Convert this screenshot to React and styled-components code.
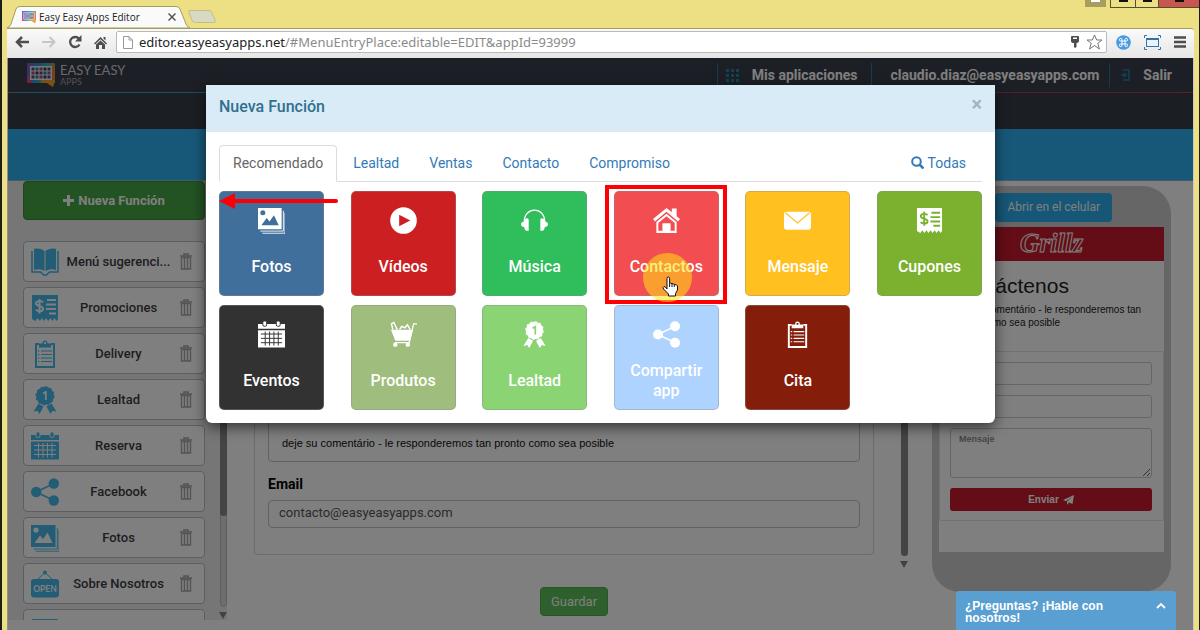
import React from "react";
import styled, { createGlobalStyle } from "styled-components";

const Global = createGlobalStyle`
  * { box-sizing: border-box; }
  body { margin: 0; font-family: Roboto, "Liberation Sans", sans-serif; overflow: hidden; }
  button, input, textarea { font: inherit; }
  button { cursor: pointer; }
  a { color: inherit; text-decoration: none; }
  svg { flex: none; }
`;

/* ---------- browser window ---------- */
const Window = styled.div`
  display: flex;
  flex-direction: column;
  height: 100vh;
  overflow: hidden;
  background: #ecdf84;
  border-left: 2px solid #1c1c18;
  border-right: 1px solid #1c1c18;
`;
const TitleBar = styled.div`
  display: flex;
  flex: 0 0 27px;
  justify-content: space-between;
  align-items: flex-start;
`;
const TabStrip = styled.div`
  display: flex;
  padding: 6px 0 0 5px;
`;
const BrowserTab = styled.div`
  position: relative;
  display: flex;
  align-items: center;
  width: 183px;
  height: 22px;
  padding: 0 14px 0 15px;
  font: 10px/20px "Open Sans", sans-serif;
  color: #222;
  z-index: 1;
`;
const TabShape = styled.svg`
  position: absolute;
  inset: 0;
  width: 100%;
  height: 100%;
  z-index: -1;
`;
const TabTitle = styled.span`
  flex: 1;
  padding-left: 3px;
  white-space: nowrap;
`;
const TabClose = styled.button`
  display: flex;
  padding: 0;
  border: 0;
  background: none;
  color: #555;
`;
const NewTab = styled.button`
  width: 24px;
  height: 13px;
  margin: 4px 0 0 0;
  padding: 0;
  border: 1px solid #c4bd84;
  border-radius: 3px;
  background: #d8d9c2;
  transform: skewX(22deg);
`;
const WindowButtons = styled.div`
  display: flex;
  height: 7px;
`;
const WinButton = styled.button`
  display: flex;
  justify-content: center;
  align-items: flex-start;
  width: ${(p) => p.$w}px;
  height: ${(p) => (p.$gap ? 7 : 8)}px;
  margin: 0 ${(p) => p.$gap || 0}px 0 0;
  padding: 0;
  border: solid #544f2c;
  border-width: ${(p) => (p.$gap ? "0" : "0 0 1px 1px")};
  background: ${(p) => p.$bg};
  &::after {
    content: "";
    width: 9px;
    height: 2px;
    background: ${(p) => p.$mark || "#111"};
  }
`;
const Toolbar = styled.div`
  display: flex;
  flex: 0 0 30px;
  align-items: center;
  gap: 13px;
  margin: 0 5px 0 5px;
  padding: 0 8px 3px;
  background: linear-gradient(#fafafa, #e6e6e6);
  border-top: 1px solid #a59c60;
  border-radius: 0 3px 0 0;
`;
const ToolButton = styled.button`
  display: flex;
  padding: 0;
  border: 0;
  background: none;
  color: ${(p) => p.$color || "#4d4d4d"};
`;
const NavButtons = styled.div`
  display: flex;
  align-items: center;
  gap: 12px;
`;
const Address = styled.div`
  display: flex;
  flex: 1;
  align-items: center;
  height: 22px;
  margin-left: -4px;
  padding: 0 3px 0 6px;
  border: 1px solid #b9b9b9;
  border-radius: 2px;
  background: #fff;
`;
const Url = styled.a`
  flex: 1;
  padding-left: 6px;
  font: 13px/18px "Noto Sans", "Open Sans", sans-serif;
  color: #8b8b8b;
  b { font-weight: 400; color: #222; }
`;
const AddressIcons = styled.div`
  display: flex;
  align-items: center;
  gap: 6px;
`;
const Extensions = styled.div`
  display: flex;
  align-items: center;
  gap: 13px;
  margin-left: -4px;
`;

/* ---------- application page ---------- */
const Page = styled.div`
  position: relative;
  display: flex;
  flex: 1;
  flex-direction: column;
  min-height: 0;
  margin: 0 5px 0 5px;
  border-left: 1px solid #8f8f8f;
  border-right: 1px solid #c8c8c8;
  background: #fff;
`;
const Header = styled.header`
  display: flex;
  flex: 0 0 34px;
  align-items: center;
  justify-content: space-between;
  padding-left: 19px;
  background: #393e4a;
`;
const Rainbow = styled.div`
  flex: 0 0 1px;
  background: linear-gradient(90deg, #8a8a30 0 5px, #3c9cc4 6px 50%, #5a6a88 60%, #95406a 75%, #a03c5c 98%, #e04030);
`;
const Brand = styled.a`
  display: flex;
  align-items: center;
  gap: 5px;
  font-family: Lato, sans-serif;
`;
const BrandText = styled.span`
  display: flex;
  flex-direction: column;
  color: #d2d2d6;
  font-size: 13px;
  line-height: 13px;
  small { font-size: 9px; line-height: 10px; color: #a0a2aa; }
`;
const HeaderNav = styled.nav`
  display: flex;
  align-items: center;
  color: #fff;
  font-size: 14px;
  font-weight: 700;
  line-height: 24px;
`;
const HeaderLink = styled.a`
  display: flex;
  align-items: center;
  gap: 13px;
  padding: 0 ${(p) => p.$right}px 0 ${(p) => p.$left}px;
  border-left: 1px solid #2a7c98;
`;
const DarkBand = styled.div`
  flex: 0 0 36px;
  background: #373c47;
`;
const BlueBand = styled.div`
  flex: 0 0 52px;
  background: #2fb0f2;
  border-bottom: 1px solid #8ab8cc;
`;
const Columns = styled.div`
  display: flex;
  flex: 1;
  min-height: 0;
  overflow: hidden;
`;

/* sidebar */
const Sidebar = styled.aside`
  display: flex;
  flex: 0 0 219px;
  align-self: stretch;
  margin-bottom: 10px;
  overflow: hidden;
  background: #ededed;
`;
const SideMain = styled.div`
  flex: 1;
  padding: 0 14px 0 15px;
`;
const NewFunction = styled.button`
  display: flex;
  align-items: center;
  justify-content: center;
  gap: 4px;
  width: 100%;
  height: 39px;
  border: 1px solid #3c8c3c;
  border-radius: 4px;
  background: #46a446;
  color: #fff;
  font-size: 13px;
  font-weight: 700;
`;
const ItemList = styled.ul`
  display: flex;
  flex-direction: column;
  gap: 5px;
  margin: 21px 0 0;
  padding: 0;
  list-style: none;
`;
const Item = styled.li`
  display: flex;
  align-items: center;
  height: 41px;
  flex: none;
  padding: 0 12px 0 7px;
  border: 1px solid #b6bcc4;
  border-radius: 4px;
  background: #fff;
`;
const ItemName = styled.a`
  flex: 1;
  padding-right: 2px;
  color: #3c3c44;
  font-size: 13px;
  font-weight: 500;
  text-align: center;
  white-space: nowrap;
`;
const Trash = styled.button`
  display: flex;
  padding: 0;
  border: 0;
  background: none;
  color: #a8a8a8;
`;
const ScrollRail = styled.div`
  display: flex;
  flex-direction: column;
  align-items: center;
  gap: 5px;
  flex: 0 0 7px;
  height: ${(p) => p.$height}px;
  color: #858585;
`;
const Track = styled.div`
  flex: 1;
  width: 7px;
  border: 1px solid #bbb;
  border-radius: 4px;
  background: #dcdcdc;
`;
const Thumb = styled.div`
  height: ${(p) => p.$size};
  margin: -1px;
  border-radius: 4px;
  background: #888;
`;

/* contact form */
const Center = styled.main`
  flex: 1;
`;
const FormRow = styled.div`
  display: flex;
  justify-content: space-between;
  gap: 26px;
  padding: 0 13px 0 27px;
`;
const FormPanel = styled.section`
  flex: 1;
  align-self: flex-start;
  padding: 20px 13px 26px 13px;
  border: 1px solid #d8d8d8;
  border-top: 0;
  border-radius: 0 0 4px 4px;
`;
const Comment = styled.textarea`
  display: block;
  width: 100%;
  height: 261px;
  padding: 234px 13px 0;
  border: 1px solid #c4c4c4;
  border-radius: 4px;
  background: #fff;
  color: #111;
  font: 11px/14px "Liberation Sans", Arial, sans-serif;
  resize: none;
  overflow: hidden;
`;
const FieldLabel = styled.label`
  display: block;
  margin: 12px 0 6px;
  color: #000;
  font-size: 14px;
  font-weight: 700;
  line-height: 20px;
`;
const TextField = styled.input`
  display: block;
  width: 100%;
  height: 28px;
  padding: 0 10px 3px;
  border: 1px solid #c4c4c4;
  border-radius: 4px;
  background: #fff;
  color: #555;
  font-size: 13px;
`;
const Save = styled.button`
  display: block;
  height: 29px;
  margin: 19px auto 0;
  padding: 0 10px;
  border: 1px solid #50a850;
  border-radius: 4px;
  background: #5cc05c;
  color: #fff;
  font-size: 13px;
`;

/* phone preview */
const Phone = styled.aside`
  flex: 0 0 239px;
  align-self: flex-start;
  height: 406px;
  margin: 5px 22px 0 11px;
  padding: 7px 7px 0;
  border-radius: 28px;
  background: #cdcdcd;
`;
const OpenOnPhone = styled.button`
  display: block;
  height: 29px;
  margin: 0 52px 5px auto;
  padding: 0 12px 2px;
  border: 0;
  border-radius: 4px;
  background: #2cacec;
  color: #fff;
  font-size: 12px;
  white-space: nowrap;
`;
const Screen = styled.div`
  height: 325px;
  background: #fff;
  font-family: "Liberation Sans", Arial, sans-serif;
`;
const PhoneBar = styled.div`
  height: 34px;
  background: #c91a2c;
  text-align: center;
  font: italic 700 27px/32px "Liberation Serif", serif;
  color: #c91a2c;
  -webkit-text-stroke: 1px #fff;
`;
const PhoneText = styled.div`
  height: 90px;
  padding: 13px 12px 0;
  color: #222;
  h2 { margin: 0; font-size: 21px; font-weight: 400; line-height: 24px; }
  p { margin: 5px 0 0; font-size: 10px; line-height: 13px; }
`;
const PhoneForm = styled.form`
  display: flex;
  flex-direction: column;
  gap: 10px;
  padding: 10px 11px 9px 10px;
  border: 1px solid #e2e2e2;
  border-radius: 2px;
`;
const phoneField = `
  display: block;
  width: 100%;
  border: 1px solid #ccc;
  border-radius: 3px;
  background: #fff;
  padding: 5px 8px;
  font-size: 9px;
  font-weight: 700;
  &::placeholder { color: #8c8c8c; opacity: 1; }
`;
const PhoneInput = styled.input`${phoneField} height: 23px;`;
const PhoneArea = styled.textarea`${phoneField} height: 50px;`;
const Send = styled.button`
  display: flex;
  align-items: center;
  justify-content: center;
  gap: 4px;
  height: 23px;
  border: 0;
  border-radius: 3px;
  background: #c91a2c;
  color: #fff;
  font-size: 10px;
  font-weight: 700;
`;

/* dialog over the page */
const Backdrop = styled.div`
  position: absolute;
  inset: 0;
  display: flex;
  justify-content: center;
  align-items: flex-start;
  padding-top: 27px;
  background: rgba(0, 0, 0, 0.5);
`;
const Dialog = styled.section`
  width: 789px;
  max-width: 100%;
  border-radius: 0 0 6px 6px;
  background: #fff;
  box-shadow: 0 4px 14px rgba(0, 0, 0, 0.6);
  overflow: hidden;
`;
const DialogHead = styled.div`
  display: flex;
  justify-content: space-between;
  height: 47px;
  padding: 12px 13px 0;
  border-bottom: 1px solid #e0e6ea;
  background: #d9ebf6;
  h1 { margin: 0; color: #31708f; font-size: 16px; font-weight: 500; line-height: 20px; }
`;
const CloseButton = styled.button`
  height: 14px;
  padding: 0;
  border: 0;
  background: none;
  color: #a4b3bc;
  font: 700 20px/14px Roboto, sans-serif;
`;
const DialogBody = styled.div`
  padding: 13px;
`;
const Tabs = styled.div`
  display: flex;
  gap: 2px;
  border-bottom: 1px solid #ddd;
`;
const TabButton = styled.button`
  display: flex;
  align-items: center;
  gap: 4px;
  height: 37px;
  margin: 0 0 -1px ${(p) => (p.$end ? "auto" : "0")};
  padding: 0 ${(p) => (p.$end ? "15px" : "13px")} 2px 13px;
  border: 1px solid ${(p) => (p.$active ? "#ddd" : "transparent")};
  border-bottom-color: ${(p) => (p.$active ? "#fff" : "transparent")};
  border-radius: 4px 4px 0 0;
  background: ${(p) => (p.$active ? "#fff" : "none")};
  color: ${(p) => (p.$active ? "#666" : "#337ab7")};
  font-size: 14px;
`;
const TileGrid = styled.div`
  display: grid;
  grid-template-columns: repeat(6, 105px);
  justify-content: space-between;
  row-gap: 9px;
  padding-top: 9px;
`;
const TileCell = styled.div`
  position: relative;
`;
const Tile = styled.button`
  display: flex;
  flex-direction: column;
  align-items: center;
  width: 100%;
  height: 105px;
  padding: 15px 8px 0;
  border: 1px solid rgba(140, 140, 140, 0.4);
  border-radius: 5px;
  background: ${(p) => p.$bg};
  color: #fff;
`;
const TileLabel = styled.span`
  display: flex;
  flex: 0 0 66px;
  align-items: center;
  font-size: 16px;
  font-weight: 500;
  line-height: 20px;
`;
const Frame = styled.div`
  position: absolute;
  inset: -6px -8px -8px -9px;
  border: 4px solid #fc0006;
  pointer-events: none;
`;
const Spot = styled.div`
  position: absolute;
  left: 29px;
  top: 62px;
  width: 49px;
  height: 49px;
  border-radius: 50%;
  background: rgba(255, 226, 20, 0.55);
  pointer-events: none;
`;
const Pointer = styled.svg`
  position: absolute;
  left: 48px;
  top: 85px;
  pointer-events: none;
`;
const Arrow = styled.svg`
  position: absolute;
  left: 0;
  top: 2px;
  pointer-events: none;
`;
const Chat = styled.button`
  position: absolute;
  right: 17px;
  bottom: 0;
  display: flex;
  justify-content: space-between;
  align-items: flex-start;
  width: 220px;
  height: 39px;
  padding: 9px 10px 0 9px;
  border: 0;
  border-radius: 3px 3px 0 0;
  background: #5a9fd1;
  color: #fff;
  font: 700 12px/12px "Liberation Sans", Arial, sans-serif;
  text-align: left;
  span { width: 150px; }
`;

/* ---------- icons ---------- */
const Svg = ({ size = 28, children }) => (
  <svg width={size} height={size} viewBox="0 0 28 28" fill="currentColor" aria-hidden="true">{children}</svg>
);
const icons = {
  book: () => (
    <>
      <path d="M3 1C7 0 11 1 13.500 3V23C10 21 6 21 3 22z" />
      <path d="M25 1C21 0 17 1 14.500 3V23C18 21 22 21 25 22z" />
      <path d="M1 3V24H9.500L12.500 27H15.500L18.500 24H27V3" fill="none" stroke="currentColor" strokeWidth="1.500" />
    </>
  ),
  coupon: (cut) => (
    <>
      <path d="M1 1H27V25l-1.500 2-2-3-2.200 3-2-3-2.200 3-2-3-2.200 3-2-3-2.200 3-2-3-2.200 3L1 25z" />
      <path d="M12 8.500C10.500 6.500 5 6.500 5 9.500s7 2 7 5.200-5.500 3-7.200 1M8.500 5V19.500" fill="none" stroke={cut} strokeWidth="2" />
      <path d="M16 6H25M15 10.500H25M15 15H25M18 19.500H25" stroke={cut} strokeWidth="2" />
    </>
  ),
  clipboard: () => (
    <>
      <path d="M8 4H5V27H23V4H20" fill="none" stroke="currentColor" strokeWidth="2" />
      <path fillRule="evenodd" d="M8 7.500V3.500H11.500A2.500 3 0 0 1 16.500 3.500H20V7.500zM13 4h2v-2h-2z" />
      <path d="M10 11H21M10 14.500H21M10 18H21M10 21.500H21M7 11h1.500M7 14.500h1.500M7 18h1.500M7 21.500h1.500" stroke="currentColor" strokeWidth="1.200" />
    </>
  ),
  medal: (cut) => (
    <>
      <path d="M7.500 17.500L12.500 20.500L8.500 28L6.500 24.800L2.500 25.800zM20.500 17.500L15.500 20.500L19.500 28L21.500 24.800L25.500 25.800z" />
      <circle cx="14" cy="9.800" r="9" fill="currentColor" />
      <circle cx="14" cy="9.800" r="9" fill="none" stroke="currentColor" strokeWidth="1.200" strokeDasharray="2.300 2.400" />
      <path d="M12 7.500L14.800 6V14" fill="none" stroke={cut} strokeWidth="1.800" />
    </>
  ),
  calendar: (cut) => (
    <>
      <path d="M0 3H28V8H0zM0 9.500H28V27.500H0z" />
      <path d="M3 13.500H25M3 18H25M3 22.500H25M7.500 11V25.500M12 11V25.500M16.500 11V25.500M21 11V25.500" stroke={cut} strokeWidth="1" />
      <rect x="5" y="0" width="4" height="5.500" rx="1.500" stroke={cut} />
      <rect x="19" y="0" width="4" height="5.500" rx="1.500" stroke={cut} />
    </>
  ),
  share: () => (
    <>
      <path d="M5 14L23 5.500M5 14L23 22.500" stroke="currentColor" strokeWidth="1.500" />
      <circle cx="5.200" cy="14" r="5.200" />
      <circle cx="22.800" cy="5.500" r="5.200" />
      <circle cx="22.800" cy="22.500" r="5.200" />
    </>
  ),
  photos: (cut) => (
    <>
      <path d="M0 1H24.500V23H0z" />
      <path d="M2.500 25H26.300V4M4.500 27.200H28V6" fill="none" stroke="currentColor" strokeWidth="0.900" />
      <path d="M3.500 19L9 11.500L12 15L16.500 8.500L21.500 19z" fill={cut} />
      <circle cx="5" cy="6" r="2.600" fill={cut} />
    </>
  ),
  open: (cut) => (
    <>
      <circle cx="14" cy="2.500" r="2" />
      <path d="M14 2.500L6 10M14 2.500L22 10" stroke="currentColor" />
      <rect x="0" y="9" width="28" height="18.500" rx="3" />
      <text x="14" y="21.500" textAnchor="middle" fontFamily="Lato" fontWeight="700" fontSize="8.500" fill={cut}>OPEN</text>
    </>
  ),
  play: (cut) => (
    <>
      <circle cx="14" cy="14" r="13.800" />
      <path d="M9.500 8L21 14L9.500 20z" fill={cut} />
    </>
  ),
  headphones: () => (
    <>
      <path d="M3.500 16C2.500 -1 25.500 -1 24.500 16" fill="none" stroke="currentColor" strokeWidth="1.300" />
      <path d="M4 12.500Q8 10.500 8 13.500V24.500H6Q3.500 24.500 3.500 21Q0 20.500 0 18T3.500 15zM24 12.500Q20 10.500 20 13.500V24.500H22Q24.500 24.500 24.500 21Q28 20.500 28 18T24.500 15z" />
    </>
  ),
  house: () => (
    <>
      <path d="M0 12.500L14 1L19.500 5.500V1.500H24.500V9.500L28 12.500L26 15L14 5L2 15z" />
      <path fillRule="evenodd" d="M3.500 15.500L14 7L24.500 15.500V27H3.500zM5.500 16.500V24.500H10V17H18V24.500H22.500V16.500L14 9.500z" />
      <path d="M10 17H18V26H10z" />
    </>
  ),
  mail: (cut) => (
    <>
      <rect x="0" y="5" width="28" height="18.500" rx="2.500" />
      <path d="M1.500 6L14 16.500L26.500 6" fill="none" stroke={cut} strokeWidth="1.200" />
    </>
  ),
  cart: () => (
    <>
      <path d="M1 9H24L20.500 20.500H5.500z" />
      <path d="M28 3H24.500L20 22.500H5" fill="none" stroke="currentColor" strokeWidth="1.300" />
      <path d="M3 9L1.500 3L4 1.500L7.500 9M10 9L12 5.500L15.500 7L18 4L21 9" fill="none" stroke="currentColor" strokeWidth="1.500" />
      <circle cx="5.500" cy="24.500" r="2.300" />
      <circle cx="18.500" cy="24.500" r="2.300" />
    </>
  ),
  envelopeTop: () => <rect x="1" y="3" width="26" height="18" rx="1" />,
};
const Icon = ({ name, cut, size }) => <Svg size={size}>{icons[name](cut)}</Svg>;

const TrashIcon = () => (
  <svg width="12" height="17" viewBox="0 0 12 17" fill="none" stroke="currentColor" aria-hidden="true">
    <path d="M0 3H12M4 2.500V1H8V2.500" strokeWidth="1.600" />
    <path d="M1.500 4.500H10.500V16H1.500zM4.500 5V15.500M7.500 5V15.500" strokeWidth="1.400" />
  </svg>
);
const AppLogo = ({ w, h }) => (
  <svg width={w} height={h} viewBox="0 0 28 24" aria-hidden="true">
    <defs>
      <linearGradient id="spectrum" x1="0" x2="1" y1="0" y2="0.300">
        <stop offset="0" stopColor="#a04cc0" />
        <stop offset="0.300" stopColor="#3f7fe0" />
        <stop offset="0.650" stopColor="#30b8c0" />
        <stop offset="1" stopColor="#f08030" />
      </linearGradient>
    </defs>
    <path d="M1 0H27Q28 0 28 1V20H27L26 24L20 20H1Q0 20 0 19V1Q0 0 1 0z" fill="url(#spectrum)" />
    <path d="M0 13H5V20H0z" fill="#d84890" />
    <path d="M14 17H28V20H27L26 24L20 20H14z" fill="#f0a030" />
    <rect x="3" y="3" width="22" height="14" fill="#eee" />
    {[4, 8, 12, 16, 20].map((x, i) => [4, 8, 12].map((y, j) => (
      <rect key={x + "-" + y} x={x + 0.500} y={y + 0.500} width="3" height="3" fill={["#3a4f9a", "#2e7fb0", "#c04058", "#31455e"][(i + j * 2) % 4]} />
    )))}
  </svg>
);
const Down = () => <svg width="8" height="7" viewBox="0 0 8 7" aria-hidden="true"><path d="M0 0H8L4 7z" fill="currentColor" /></svg>;

/* ---------- content ---------- */
const menu = [
  ["book", "Menú sugerenci..."], ["coupon", "Promociones"], ["clipboard", "Delivery"], ["medal", "Lealtad"],
  ["calendar", "Reserva"], ["share", "Facebook"], ["photos", "Fotos"], ["open", "Sobre Nosotros"], ["envelopeTop", ""],
];
const tiles = [
  ["photos", "Fotos", "#416f9c"], ["play", "Vídeos", "#cc1f21"], ["headphones", "Música", "#30bd5b"],
  ["house", "Contactos", "#f24d50"], ["mail", "Mensaje", "#ffc020"], ["coupon", "Cupones", "#7bb12f"],
  ["calendar", "Eventos", "#323232"], ["cart", "Produtos", "#9fbd7c"], ["medal", "Lealtad", "#8ad474"],
  ["share", "Compartir app", "#aed3ff"], ["clipboard", "Cita", "#841e0b"],
];
const MenuIcon = styled.span`
  display: flex;
  color: #45b8ea;
`;

export default function App() {
  return (
    <Window>
      <Global />
      <TitleBar>
        <TabStrip>
          <BrowserTab>
            <TabShape viewBox="0 0 183 22" preserveAspectRatio="none">
              <path d="M0 22Q3 21 4 18L9 3Q10 .5 13 .5H169Q172 .5 173 3L179 18Q180 21 183 22z" fill="#fafafa" stroke="#a59c60" />
            </TabShape>
            <AppLogo w={14} h={12} />
            <TabTitle>Easy Easy Apps Editor</TabTitle>
            <TabClose aria-label="Cerrar pestaña">
              <svg width="8" height="8" viewBox="0 0 8 8" stroke="currentColor" strokeWidth="1.500"><path d="M.5.5l7 7M7.500.5l-7 7" /></svg>
            </TabClose>
          </BrowserTab>
          <NewTab aria-label="Nueva pestaña" />
        </TabStrip>
        <WindowButtons>
          <WinButton $w={21} $gap={4} $bg="#a69d5e" $mark="#fff" aria-label="Anclar" />
          <WinButton $w={25} $bg="#ecdf84" aria-label="Minimizar" />
          <WinButton $w={23} $bg="#ecdf84" aria-label="Maximizar" />
          <WinButton $w={41} $bg="#c75550" aria-label="Cerrar" />
        </WindowButtons>
      </TitleBar>
      <Toolbar>
        <NavButtons>
          <ToolButton aria-label="Atrás">
            <svg width="15" height="12" viewBox="0 0 15 12" fill="none" stroke="currentColor" strokeWidth="2.500"><path d="M14 6H2M7 1L2 6L7 11" /></svg>
          </ToolButton>
          <ToolButton $color="#c6c6c6" aria-label="Adelante">
            <svg width="14" height="12" viewBox="0 0 14 12" fill="none" stroke="currentColor" strokeWidth="2"><path d="M0 6H12M7.500 1L12.500 6L7.500 11" /></svg>
          </ToolButton>
          <ToolButton aria-label="Recargar">
            <svg width="14" height="14" viewBox="0 0 14 14"><path d="M11.500 9.500A5 5 0 1 1 11 3.800" fill="none" stroke="currentColor" strokeWidth="2.300" /><path d="M13.500 0V6.500H7z" fill="currentColor" /></svg>
          </ToolButton>
          <ToolButton aria-label="Inicio">
            <svg width="13" height="13" viewBox="0 0 13 13" fill="currentColor"><path d="M6.500 1L13 7.500L12 8.500L6.500 3.200L1 8.500L0 7.500zM9.500 1H11.500V4.500L9.500 2.500zM2 8.500L6.500 4.500L11 8.500V13H8V9H5V13H2z" /></svg>
          </ToolButton>
        </NavButtons>
        <Address>
          <svg width="10" height="13" viewBox="0 0 10 13" fill="#fff" stroke="#999"><path d="M.5.5H6L9.500 4V12.500H.5zM6 .5V4H9.500" /></svg>
          <Url href="#MenuEntryPlace"><b>editor.easyeasyapps.net</b>/#MenuEntryPlace:editable=EDIT&amp;appId=93999</Url>
          <AddressIcons>
            <ToolButton aria-label="Contraseñas">
              <svg width="10" height="12" viewBox="0 0 10 12" fill="currentColor"><path fillRule="evenodd" d="M2 0H8Q9 0 9 1V5Q9 7 6.500 7V11L5 12L4 11V7Q1 7 1 5V1Q1 0 2 0zM3 1.500V3H7V1.500z" /></svg>
            </ToolButton>
            <ToolButton $color="#777" aria-label="Favorito">
              <svg width="17" height="16" viewBox="0 0 17 16" fill="#fff" stroke="currentColor"><path d="M8.500 1L10.700 6H16L11.800 9.300L13.400 15L8.500 11.500L3.600 15L5.200 9.300L1 6H6.300z" /></svg>
            </ToolButton>
          </AddressIcons>
        </Address>
        <Extensions>
          <ToolButton aria-label="Extensión">
            <svg width="15" height="15" viewBox="0 0 15 15"><circle cx="7.500" cy="7.500" r="7.300" fill="#4b9be0" /><path d="M6 6V4.700A1.300 1.300 0 1 0 4.700 6H10.300A1.300 1.300 0 1 0 9 4.700V10.300A1.300 1.300 0 1 0 10.300 9H4.700A1.300 1.300 0 1 0 6 10.300z" fill="none" stroke="#fff" /></svg>
          </ToolButton>
          <ToolButton $color="#3673a5" aria-label="Captura">
            <svg width="17" height="15" viewBox="0 0 17 15" fill="none" stroke="currentColor"><path d="M.5 3V.5H3M14 .5H16.500V3M16.500 12V14.500H14M3 14.500H.5V12" /><rect x="2.500" y="3.500" width="12" height="8" fill="#e8f2fa" /><path d="M2.500 4H14.500" strokeWidth="2" /></svg>
          </ToolButton>
          <ToolButton aria-label="Menú">
            <svg width="12" height="12" viewBox="0 0 12 12" stroke="currentColor" strokeWidth="2.400"><path d="M0 1.500H12M0 6H12M0 10.500H12" /></svg>
          </ToolButton>
        </Extensions>
      </Toolbar>

      <Page>
        <Header>
          <Brand href="#inicio">
            <AppLogo w={28} h={24} />
            <BrandText>EASY EASY<small>APPS</small></BrandText>
          </Brand>
          <HeaderNav>
            <HeaderLink href="#aplicaciones" $left={8} $right={14}>
              <svg width="13" height="13" viewBox="0 0 13 13" fill="#1f86a8">
                {[0, 5, 10].map((x) => [0, 5, 10].map((y) => <rect key={x + "-" + y} x={x} y={y} width="3" height="3" />))}
              </svg>
              Mis aplicaciones
            </HeaderLink>
            <HeaderLink href="#cuenta" $left={18} $right={10}>claudio.diaz@easyeasyapps.com</HeaderLink>
            <HeaderLink href="#salir" $left={11} $right={21}>
              <svg width="9" height="12" viewBox="0 0 9 12" fill="none" stroke="#1f86a8" strokeWidth="1.500"><path d="M2 1H8V11H2M0 6H5M3 4L5 6L3 8" /></svg>
              Salir
            </HeaderLink>
          </HeaderNav>
        </Header>
        <Rainbow />
        <DarkBand />
        <BlueBand />
        <Columns>
          <Sidebar>
            <SideMain>
              <NewFunction>
                <svg width="11" height="11" viewBox="0 0 11 11" stroke="currentColor" strokeWidth="3"><path d="M5.500 0V11M0 5.500H11" /></svg>
                Nueva Función
              </NewFunction>
              <ItemList>
                {menu.map(([icon, name]) => (
                  <Item key={icon}>
                    <MenuIcon><Icon name={icon} cut="#fff" size={28} /></MenuIcon>
                    <ItemName href={"#" + icon}>{name}</ItemName>
                    <Trash aria-label="Eliminar"><TrashIcon /></Trash>
                  </Item>
                ))}
              </ItemList>
            </SideMain>
            <ScrollRail $height={438}>
              <Track><Thumb $size="79%" /></Track>
              <Down />
            </ScrollRail>
          </Sidebar>

          <Center>
            <FormRow>
              <FormPanel>
                <Comment readOnly aria-label="Comentario" value="deje su comentário - le responderemos tan pronto como sea posible" />
                <FieldLabel htmlFor="email">Email</FieldLabel>
                <TextField id="email" type="email" defaultValue="contacto@easyeasyapps.com" />
              </FormPanel>
              <ScrollRail $height={387}>
                <Track><Thumb $size="calc(100% + 2px)" /></Track>
                <Down />
              </ScrollRail>
            </FormRow>
            <Save>Guardar</Save>
          </Center>

          <Phone>
            <OpenOnPhone>Abrir en el celular</OpenOnPhone>
            <Screen>
              <PhoneBar>Grillz</PhoneBar>
              <PhoneText>
                <h2>Contáctenos</h2>
                <p>deje su comentário - le responderemos tan pronto como sea posible</p>
              </PhoneText>
              <PhoneForm>
                <PhoneInput aria-label="Nombre" />
                <PhoneInput aria-label="Correo" />
                <PhoneArea aria-label="Mensaje" placeholder="Mensaje" />
                <Send type="button">
                  Enviar
                  <svg width="11" height="10" viewBox="0 0 11 10" fill="currentColor"><path d="M11 0L9.500 9L6 7.500L4 10V6.500L9 2L3 6.200L0 5z" /></svg>
                </Send>
              </PhoneForm>
            </Screen>
          </Phone>
        </Columns>

        <Backdrop>
          <Dialog role="dialog" aria-labelledby="dialog-title">
            <DialogHead>
              <h1 id="dialog-title">Nueva Función</h1>
              <CloseButton aria-label="Cerrar">×</CloseButton>
            </DialogHead>
            <DialogBody>
              <Tabs role="tablist">
                <TabButton role="tab" $active>Recomendado</TabButton>
                <TabButton role="tab">Lealtad</TabButton>
                <TabButton role="tab">Ventas</TabButton>
                <TabButton role="tab">Contacto</TabButton>
                <TabButton role="tab">Compromiso</TabButton>
                <TabButton role="tab" $end>
                  <svg width="13" height="13" viewBox="0 0 13 13" fill="none" stroke="currentColor" strokeWidth="2"><circle cx="5.500" cy="5.500" r="4.300" /><path d="M8.500 8.500L12.500 12.500" strokeWidth="2.500" /></svg>
                  Todas
                </TabButton>
              </Tabs>
              <TileGrid>
                {tiles.map(([icon, name, bg]) => (
                  <TileCell key={name}>
                    <Tile $bg={bg}>
                      <Icon name={icon} cut={bg} size={27} />
                      <TileLabel>{name}</TileLabel>
                    </Tile>
                    {name === "Fotos" && (
                      <Arrow width="120" height="16" viewBox="0 0 120 16">
                        <path d="M14 8H117" stroke="#fc0006" strokeWidth="4" strokeLinecap="round" />
                        <path d="M0 8L16 0V16z" fill="#fc0006" />
                      </Arrow>
                    )}
                    {name === "Contactos" && (
                      <>
                        <Frame />
                        <Spot />
                        <Pointer width="17" height="21" viewBox="0 0 17 21">
                          <path d="M5 13V2.500Q5 1 6.300 1T7.600 2.500V7.500Q8.500 6.500 10 7.800Q11 7 12.200 8.500Q14.500 8 15.500 10V14L13.500 17.500V20H6.500V18L1.500 13Q.5 11 2 10.500Q3.500 10.500 5 13zM7.600 7.500V11M10 8V11M12.300 8.500V11" fill="#fff" stroke="#111" strokeLinejoin="round" />
                        </Pointer>
                      </>
                    )}
                  </TileCell>
                ))}
              </TileGrid>
            </DialogBody>
          </Dialog>
        </Backdrop>
        <Chat>
          <span>¿Preguntas? ¡Hable con nosotros!</span>
          <svg width="10" height="12" viewBox="0 0 10 12" fill="none" stroke="currentColor" strokeWidth="1.800"><path d="M1 8L5 4L9 8" /></svg>
        </Chat>
      </Page>
    </Window>
  );
}
